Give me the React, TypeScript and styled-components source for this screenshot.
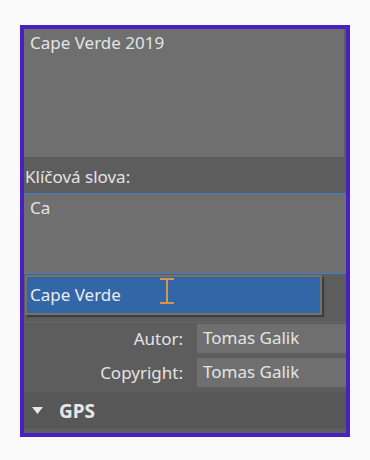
import React from "react";
import styled, { createGlobalStyle } from "styled-components";

const Global = createGlobalStyle`
  html, body {
    margin: 0;
    background: #f9f9f9;
  }
  body {
    font-family: "Noto Sans", "Open Sans", sans-serif;
    font-size: 17px;
    color: #e4e4e4;
  }
`;

const Frame = styled.div`
  margin: 25px 0 0 20px;
  width: 322px;
  border: 4px solid #4a21c1;
  background: #5d5d5d;
  position: relative;
  overflow: hidden;
`;

const TextArea = styled.div<{ $h: number; $focused?: boolean }>`
  height: ${(p) => p.$h}px;
  box-sizing: border-box;
  background: #6f6f6f;
  padding: 2px 6px;
  margin-right: ${(p) => (p.$focused ? 0 : 2)}px;
  border-top: ${(p) => (p.$focused ? "1px solid #3f7fc5" : "none")};
  border-bottom: 1px solid ${(p) => (p.$focused ? "#3f7fc5" : "#575757")};
  line-height: 24px;
`;

const FieldLabel = styled.div`
  height: 35px;
  display: flex;
  align-items: center;
  padding: 2px 0 0 1px;
  box-sizing: border-box;
`;

const CoveredRow = styled.div`
  height: 48px;
  margin-right: 2px;
  border-bottom: 1px solid #676767;
`;

const Form = styled.div`
  display: grid;
  grid-template-columns: 159px 1fr;
  column-gap: 14px;
  row-gap: 5px;
  padding: 1px 0 5px;
`;

const Label = styled.div`
  text-align: right;
  line-height: 29px;
`;

const Input = styled.div`
  height: 29px;
  line-height: 28px;
  background: #6f6f6f;
  padding-left: 6px;
  margin-right: -1px;
`;

const Section = styled.div`
  height: 41px;
  background: #575757;
  border-bottom: 4px solid #5f5f5f;
  box-sizing: border-box;
  display: flex;
  align-items: center;
  padding-left: 8px;
  gap: 16px;
  font-weight: 700;
  font-size: 19px;
  color: #e8e8e8;
`;

const Popup = styled.div`
  position: absolute;
  left: 1px;
  top: 246px;
  box-sizing: border-box;
  width: 297px;
  height: 40px;
  background: #3366a6;
  border: 2px solid #727272;
  box-shadow: 2px 2px 1px rgba(40, 40, 40, 0.6);
  padding-left: 3px;
  line-height: 36px;
  color: #ececec;
`;

const Cursor = styled.svg`
  position: absolute;
  left: 135px;
  top: 249px;
`;

export default function App() {
  return (
    <>
      <Global />
      <Frame>
        <TextArea $h={129}>Cape Verde 2019</TextArea>
        <FieldLabel>Klíčová slova:</FieldLabel>
        <TextArea $h={81} $focused>
          Ca
        </TextArea>
        <CoveredRow />
        <Form>
          <Label>Autor:</Label>
          <Input>Tomas Galik</Input>
          <Label>Copyright:</Label>
          <Input>Tomas Galik</Input>
        </Form>
        <Section>
          <svg width="11" height="7" viewBox="0 0 11 7">
            <path d="M0 0 H11 L5.5 7 Z" fill="#e8e8e8" />
          </svg>
          GPS
        </Section>
        <Popup>Cape Verde</Popup>
        <Cursor width="16" height="26" viewBox="0 0 16 26">
          <path
            d="M1 1 H15 M8 1 V25 M1 25 H15"
            stroke="#d5964c"
            strokeWidth="2"
            fill="none"
          />
        </Cursor>
      </Frame>
    </>
  );
}
